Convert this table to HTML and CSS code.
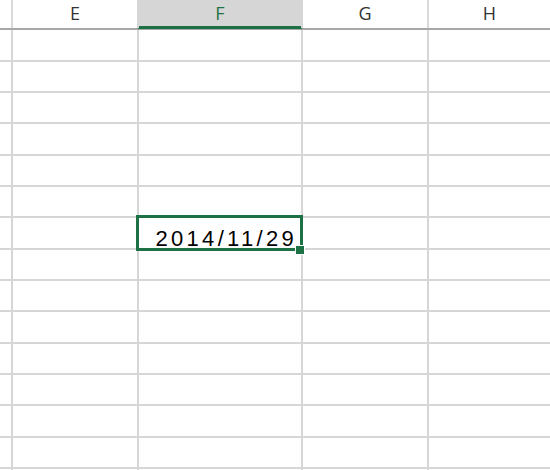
FILE: index.html
```html
<!DOCTYPE html>
<html>
<head>
<meta charset="utf-8">
<link rel="stylesheet" href="styles.css">
</head>
<body>
<div class="sheet">
  <div class="head">
    <div class="hc"></div>
    <div class="hc">E</div>
    <div class="hc hc-sel">F</div>
    <div class="hc">G</div>
    <div class="hc">H</div>
  </div>
  <div class="body">
    <div class="c"></div><div class="c"></div><div class="c"></div><div class="c"></div><div class="c"></div>
    <div class="c"></div><div class="c"></div><div class="c"></div><div class="c"></div><div class="c"></div>
    <div class="c"></div><div class="c"></div><div class="c"></div><div class="c"></div><div class="c"></div>
    <div class="c"></div><div class="c"></div><div class="c"></div><div class="c"></div><div class="c"></div>
    <div class="c"></div><div class="c"></div><div class="c"></div><div class="c"></div><div class="c"></div>
    <div class="c"></div><div class="c"></div><div class="c"></div><div class="c"></div><div class="c"></div>
    <div class="c"></div><div class="c"></div><div class="c active">2014/11/29</div><div class="c"></div><div class="c"></div>
    <div class="c"></div><div class="c"></div><div class="c"></div><div class="c"></div><div class="c"></div>
    <div class="c"></div><div class="c"></div><div class="c"></div><div class="c"></div><div class="c"></div>
    <div class="c"></div><div class="c"></div><div class="c"></div><div class="c"></div><div class="c"></div>
    <div class="c"></div><div class="c"></div><div class="c"></div><div class="c"></div><div class="c"></div>
    <div class="c"></div><div class="c"></div><div class="c"></div><div class="c"></div><div class="c"></div>
    <div class="c"></div><div class="c"></div><div class="c"></div><div class="c"></div><div class="c"></div>
    <div class="c"></div><div class="c"></div><div class="c"></div><div class="c"></div><div class="c"></div>
    <div class="c"></div><div class="c"></div><div class="c"></div><div class="c"></div><div class="c"></div>
  </div>
</div>
</body>
</html>
```

FILE: styles.css
```css
html, body {
  margin: 0;
  padding: 0;
  background: #ffffff;
  overflow: hidden;
}

.sheet {
  width: 550px;
  height: 470px;
  overflow: hidden;
}

.head {
  display: grid;
  grid-template-columns: 11px 124px 162px 124px 1fr;
  column-gap: 2px;
  background: #dadada;
  height: 28.33px;
  border-bottom: 2px solid #a8a8a8;
}

.hc {
  background: #ffffff;
  display: flex;
  align-items: center;
  justify-content: center;
  font-family: "Open Sans", "Noto Sans", sans-serif;
  font-size: 18px;
  color: #333333;
  padding-bottom: 3px;
  box-sizing: border-box;
}

.hc-sel {
  background: #d6d6d6;
  color: #1e7145;
  box-shadow: inset 0 -2px 0 #1e7145, -2px 0 0 #d6d6d6, 2px 0 0 #d6d6d6;
  position: relative;
}

.hc-sel::after {
  content: "";
  position: absolute;
  left: -1px;
  right: -1px;
  bottom: -1px;
  height: 1px;
  background: #1e7145;
}

.body {
  display: grid;
  grid-template-columns: 11px 124px 162px 124px 1fr;
  grid-auto-rows: 29.33px;
  gap: 2px;
  background: #d6d6d6;
}

.c {
  background: #ffffff;
}

.c.active {
  position: relative;
  display: flex;
  justify-content: flex-end;
  align-items: flex-end;
  padding-right: 4px;
  font-family: "Liberation Sans", Arial, sans-serif;
  font-size: 22px;
  letter-spacing: 3.3px;
  line-height: 19px;
  color: #000000;
}

.c.active::before {
  content: "";
  position: absolute;
  top: -3px;
  bottom: -3px;
  left: -3px;
  right: -2px;
  border: 3px solid #1e7145;
}

.c.active::after {
  content: "";
  position: absolute;
  right: -4px;
  bottom: -7px;
  width: 8px;
  height: 8px;
  background: #1e7145;
  border: 1px solid #ffffff;
}
```
